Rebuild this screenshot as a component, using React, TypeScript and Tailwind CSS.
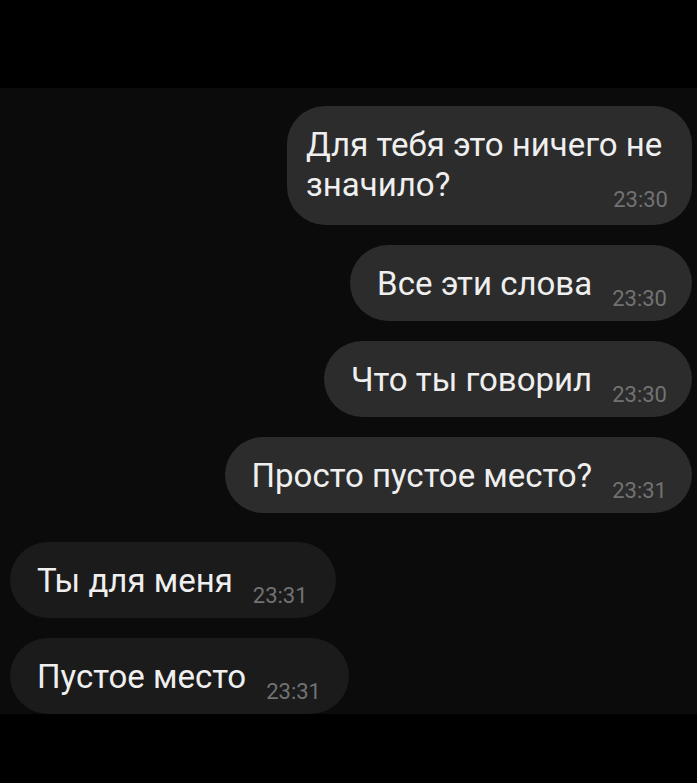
const font = { fontFamily: "Roboto, 'Noto Sans', sans-serif" };

type Msg = { text: string; time: string; mine: boolean };

const messages: Msg[] = [
  { text: "Все эти слова", time: "23:30", mine: true },
  { text: "Что ты говорил", time: "23:30", mine: true },
  { text: "Просто пустое место?", time: "23:31", mine: true },
  { text: "Ты для меня", time: "23:31", mine: false },
  { text: "Пустое место", time: "23:31", mine: false },
];

function Time({ value }: { value: string }) {
  return (
    <span className="text-[22px] leading-none text-[#727272] mb-[-6px] shrink-0">
      {value}
    </span>
  );
}

function Bubble({ msg }: { msg: Msg }) {
  return (
    <div
      className={`flex items-end gap-[20px] rounded-[38px] pl-[27px] pt-[19px] pb-[17px] ${
        msg.mine
          ? "self-end mr-[5px] pr-[25px] bg-[#2c2c2c]"
          : "self-start ml-[10px] pr-[28px] bg-[#1b1b1b]"
      }`}
    >
      <span className="text-[33px] leading-[40px] text-[#efefef]">{msg.text}</span>
      <Time value={msg.time} />
    </div>
  );
}

export default function App() {
  return (
    <div className="w-[697px] h-[783px] bg-black overflow-hidden" style={font}>
      <div className="h-[88px]" />
      <div className="bg-[#0b0b0b] h-[626px] pt-[18px] flex flex-col">
        <div className="self-end mr-[5px] w-[405px] rounded-[38px] bg-[#2c2c2c] pl-[19px] pr-[24px] pt-[19px] pb-[20px] text-[33px] leading-[40px] text-[#efefef]">
          <div className="whitespace-nowrap">Для тебя это ничего не</div>
          <div className="flex items-end justify-between">
            <span>значило?</span>
            <Time value="23:30" />
          </div>
        </div>
        <div className="flex flex-col gap-[20px] mt-[20px]">
          {messages.slice(0, 3).map((m, i) => (
            <Bubble key={i} msg={m} />
          ))}
        </div>
        <div className="flex flex-col gap-[20px] mt-[29px]">
          {messages.slice(3).map((m, i) => (
            <Bubble key={i} msg={m} />
          ))}
        </div>
      </div>
    </div>
  );
}
